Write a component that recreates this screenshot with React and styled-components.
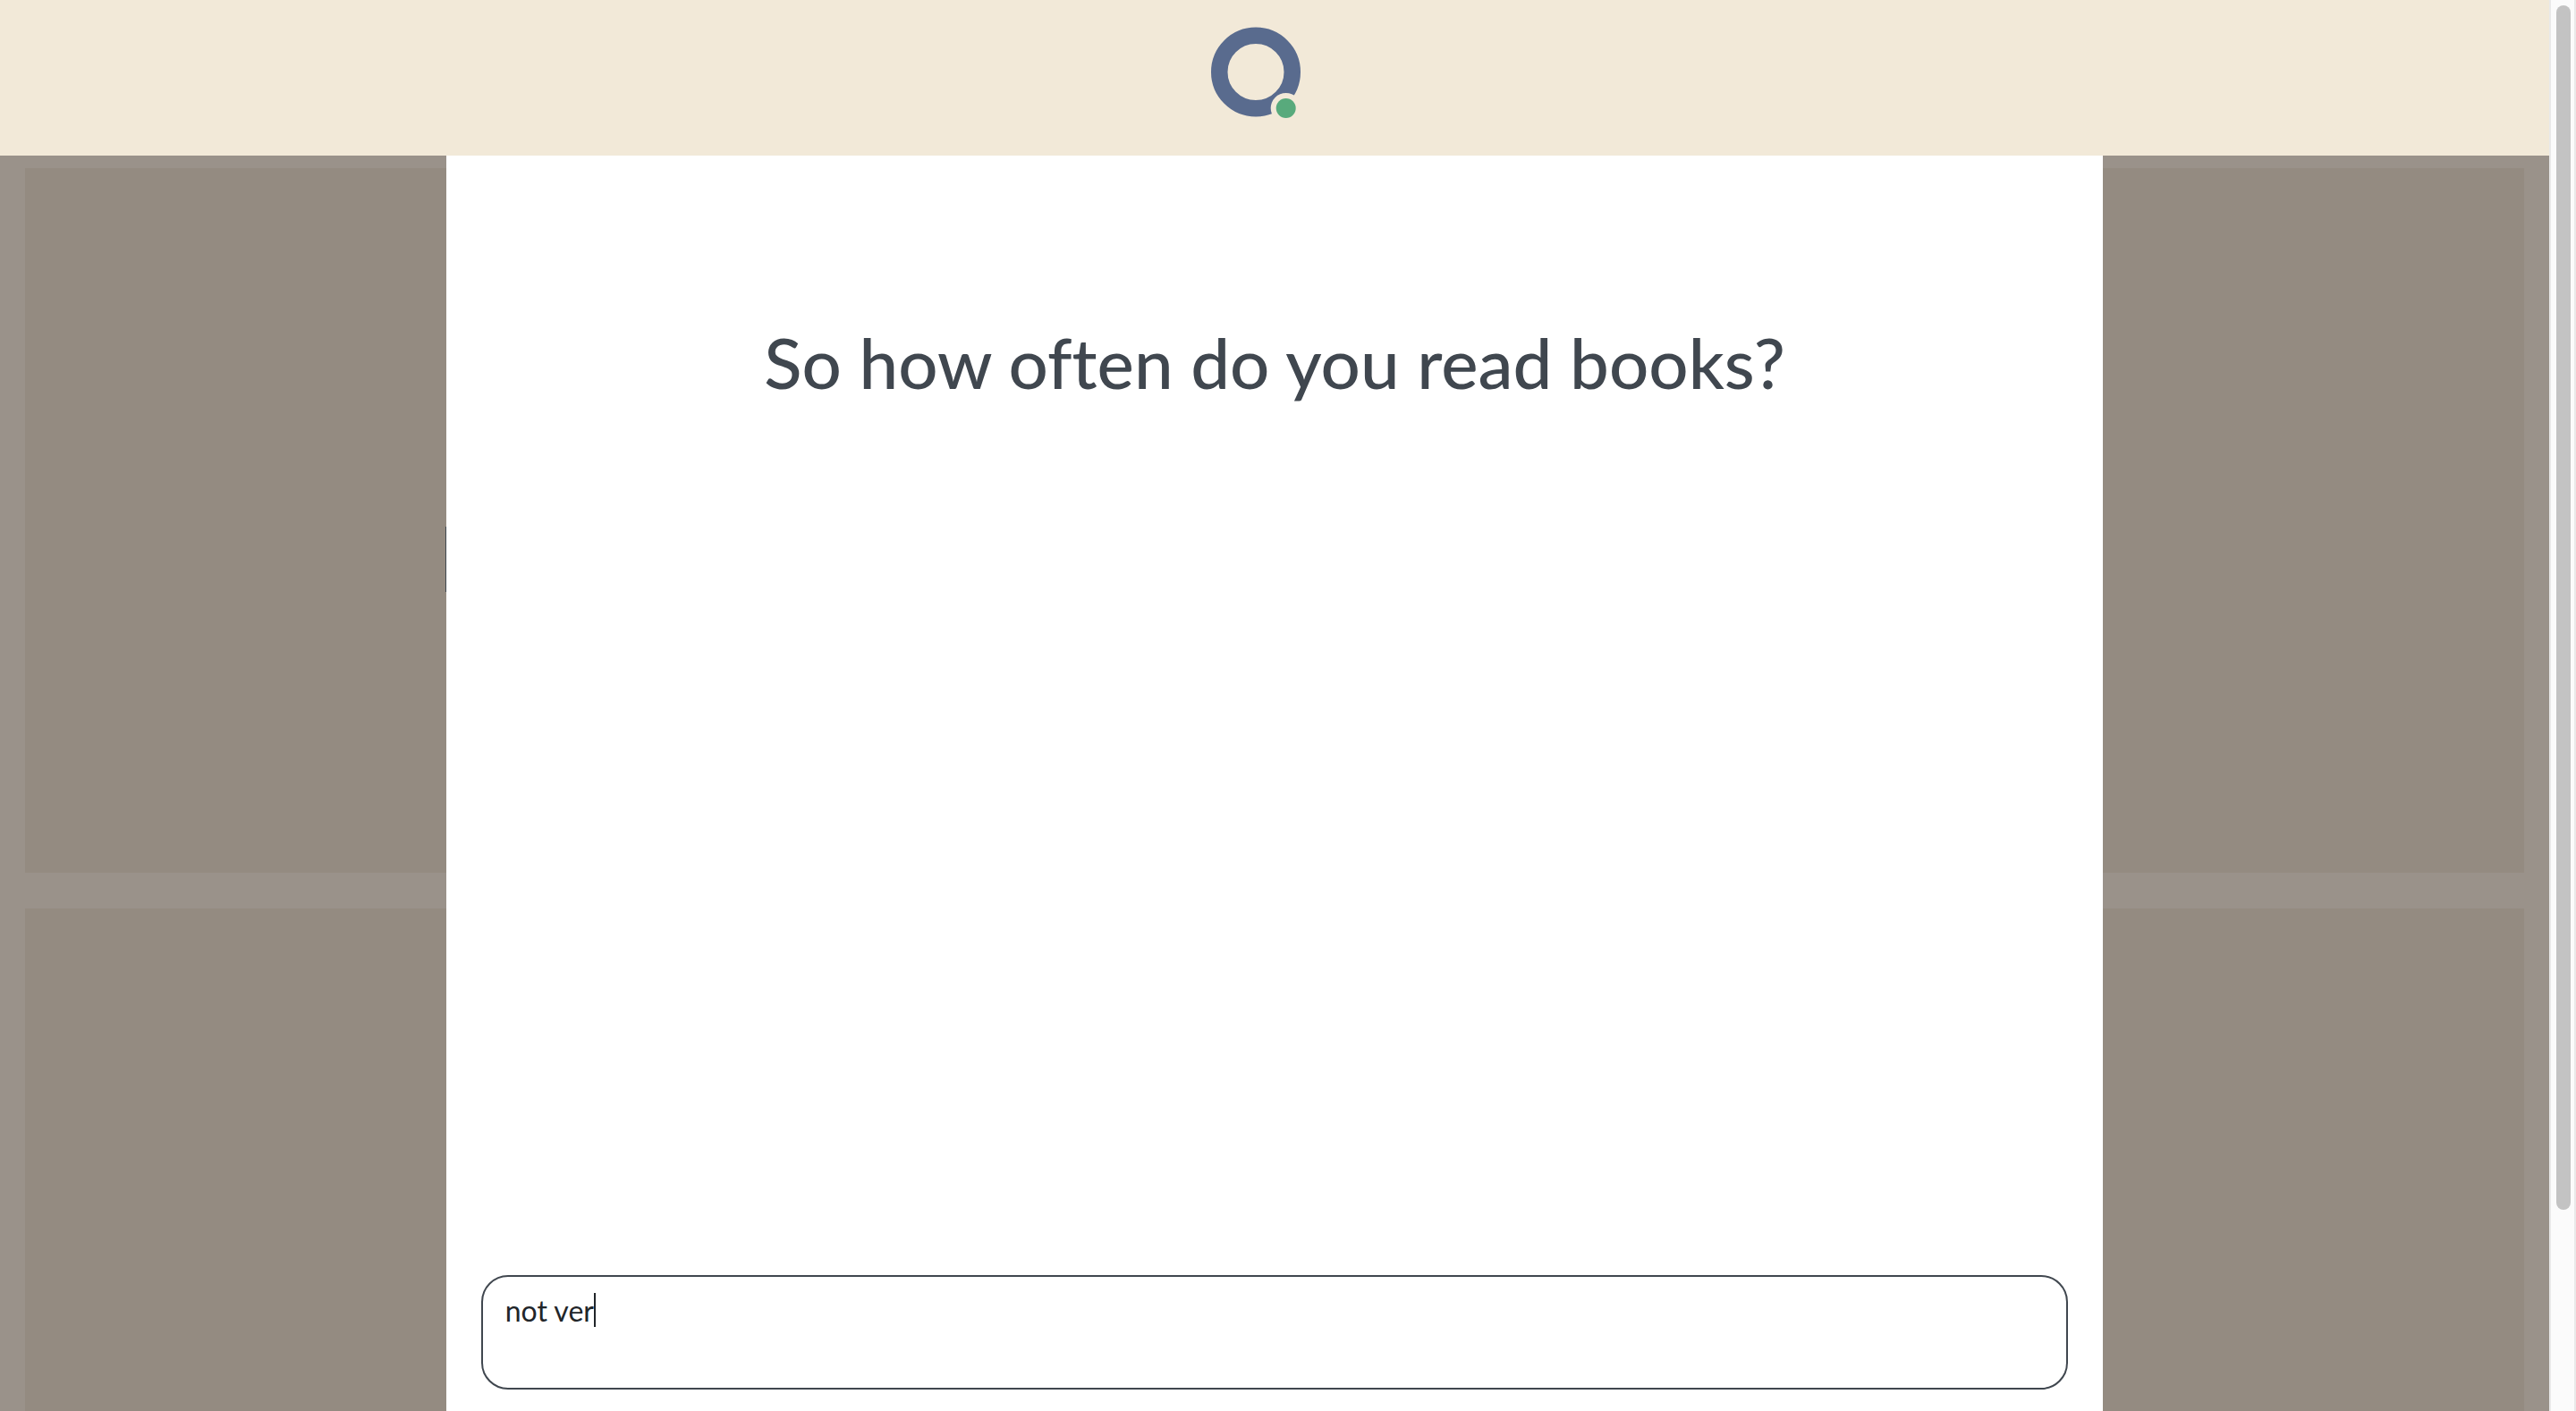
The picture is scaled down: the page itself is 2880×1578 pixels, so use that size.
import React, { useState } from "react";
import styled, { createGlobalStyle } from "styled-components";

const GlobalStyle = createGlobalStyle`
  *, *::before, *::after { box-sizing: border-box; }
  body { margin: 0; font-family: Lato, "Open Sans", sans-serif; background: #fff; overflow: hidden; }
`;

const Shell = styled.div`
  display: grid;
  grid-template-columns: minmax(0, 1fr) 30px;
  height: 100vh;
`;

const Page = styled.div`
  display: flex;
  flex-direction: column;
  min-height: 0;
`;

const Header = styled.header`
  display: flex;
  flex: none;
  justify-content: center;
  padding: 30px 28px 42px;
  background: #f2e9d8;
`;

const HomeLink = styled.a`
  display: block;
  line-height: 0;
`;

const Main = styled.main`
  position: relative;
  flex: 1;
  min-height: 0;
  overflow: hidden;
  background: #9a928a;
`;

const Panels = styled.div`
  display: flex;
  flex-direction: column;
  gap: 40px;
  padding: 14px 28px;
`;

const Panel = styled.section`
  flex: none;
  height: 788px;
  background: #948b81;
`;

const Dialog = styled.form`
  position: absolute;
  inset: 0;
  width: 65%;
  margin: 0 auto;
  padding: 183px 39px 24px;
  display: flex;
  flex-direction: column;
  justify-content: space-between;
  background: #fff;

  &::before {
    content: "";
    position: absolute;
    left: -1px;
    top: 415px;
    width: 1px;
    height: 73px;
    background: #3f474f;
  }
`;

const Question = styled.h1`
  margin: 0;
  color: #40474f;
  font-size: 78px;
  font-weight: 500;
  font-variant-ligatures: none;
  line-height: 96px;
  text-align: center;
`;

const Field = styled.div`
  position: relative;
  display: flex;
`;

const Answer = styled.textarea`
  width: 100%;
  height: 128px;
  padding: 18px 25px;
  border: 2px solid #40474f;
  border-radius: 30px;
  outline: none;
  resize: none;
  background: #fff;
  color: #212529;
  font-family: inherit;
  font-size: 32px;
  line-height: 40px;
`;

const Caret = styled.span`
  position: absolute;
  left: 126px;
  top: 20px;
  width: 2px;
  height: 38px;
  background: #212529;
`;

const Track = styled.div`
  padding: 6px;
  border: solid #e9e9e9;
  border-width: 0 2px;
  background: #fbfbfb;
`;

const Thumb = styled.div`
  width: 16px;
  height: 86%;
  border-radius: 8px;
  background: #c3c3c3;
`;

function Logo() {
  return (
    <svg width="142" height="102" viewBox="0 0 142 102" aria-hidden="true">
      <circle cx="50" cy="50.5" r="40.75" fill="none" stroke="#596b8e" strokeWidth="18.5" />
      <circle cx="83.7" cy="91" r="17" fill="#f2e9d8" />
      <circle cx="83.7" cy="91" r="11" fill="#58aa7c" />
    </svg>
  );
}

export default function App() {
  const [answer, setAnswer] = useState("not ver");
  return (
    <>
      <GlobalStyle />
      <Shell>
        <Page>
          <Header>
            <HomeLink href="#" aria-label="Home">
              <Logo />
            </HomeLink>
          </Header>
          <Main>
            <Panels>
              <Panel />
              <Panel />
            </Panels>
            <Dialog onSubmit={(e) => e.preventDefault()}>
              <Question id="question">So how often do you read books?</Question>
              <Field>
                <Answer
                  aria-labelledby="question"
                  value={answer}
                  onChange={(e) => setAnswer(e.target.value)}
                />
                {answer === "not ver" && <Caret />}
              </Field>
            </Dialog>
          </Main>
        </Page>
        <Track>
          <Thumb />
        </Track>
      </Shell>
    </>
  );
}
